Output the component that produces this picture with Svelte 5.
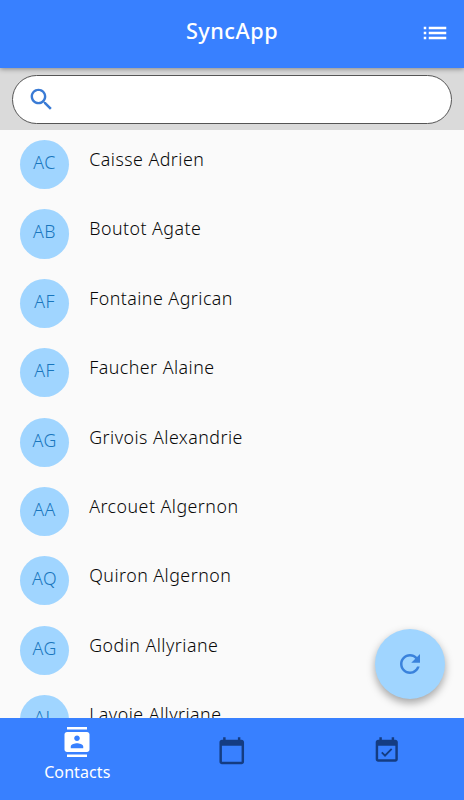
<script>
	const contacts = [
		{ name: 'Caisse Adrien', initials: 'AC' },
		{ name: 'Boutot Agate', initials: 'AB' },
		{ name: 'Fontaine Agrican', initials: 'AF' },
		{ name: 'Faucher Alaine', initials: 'AF' },
		{ name: 'Grivois Alexandrie', initials: 'AG' },
		{ name: 'Arcouet Algernon', initials: 'AA' },
		{ name: 'Quiron Algernon', initials: 'AQ' },
		{ name: 'Godin Allyriane', initials: 'AG' },
		{ name: 'Lavoie Allyriane', initials: 'AL' }
	];
</script>

<div class="app">
	<header>
		<h1>SyncApp</h1>
		<button class="menu" aria-label="Menu">
			<svg viewBox="0 0 24 24"><path d="M3 13h2v-2H3v2zm0 4h2v-2H3v2zm0-8h2V7H3v2zm4 4h14v-2H7v2zm0 4h14v-2H7v2zM7 7v2h14V7H7z" /></svg>
		</button>
	</header>

	<div class="search">
		<label class="field">
			<svg viewBox="0 0 24 24"><path d="M15.5 14h-.79l-.28-.27C15.41 12.59 16 11.11 16 9.5 16 5.91 13.09 3 9.5 3S3 5.91 3 9.5 5.91 16 9.5 16c1.61 0 3.09-.59 4.23-1.57l.27.28v.79l5 4.99L20.49 19l-4.99-5zm-6 0C7.01 14 5 11.99 5 9.5S7.01 5 9.5 5 14 7.01 14 9.5 11.99 14 9.5 14z" /></svg>
			<input type="text" aria-label="Search" />
		</label>
	</div>

	<main>
		<ul>
			{#each contacts as contact}
				<li>
					<span class="avatar">{contact.initials}</span>
					<span class="name">{contact.name}</span>
				</li>
			{/each}
		</ul>
	</main>

	<nav>
		<button class="tab active">
			<svg viewBox="0 0 24 24"><path d="M20 0H4v2h16V0zM4 24h16v-2H4v2zM20 4H4c-1.1 0-2 .9-2 2v12c0 1.1.9 2 2 2h16c1.1 0 2-.9 2-2V6c0-1.1-.9-2-2-2zm-8 2.75c1.24 0 2.25 1.01 2.25 2.25s-1.01 2.25-2.25 2.25S9.75 10.24 9.75 9 10.76 6.75 12 6.75zM17 17H7v-1.5c0-1.67 3.33-2.5 5-2.5s5 .83 5 2.5V17z" /></svg>
			<span>Contacts</span>
		</button>
		<button class="tab" aria-label="Calendar">
			<svg viewBox="0 0 24 24"><path d="M20 3h-1V1h-2v2H7V1H5v2H4c-1.1 0-2 .9-2 2v16c0 1.1.9 2 2 2h16c1.1 0 2-.9 2-2V5c0-1.1-.9-2-2-2zm0 18H4V8h16v13z" /></svg>
		</button>
		<button class="tab" aria-label="Events">
			<svg viewBox="0 0 24 24"><path d="M16.53 11.06L15.47 10l-4.88 4.88-2.12-2.12-1.06 1.06L10.59 17l5.94-5.94zM19 3h-1V1h-2v2H8V1H6v2H5c-1.11 0-1.99.9-1.99 2L3 19c0 1.1.89 2 2 2h14c1.1 0 2-.9 2-2V5c0-1.1-.9-2-2-2zm0 16H5V8h14v11z" /></svg>
		</button>
	</nav>

	<!-- floats over the list -->
	<button class="refresh" aria-label="Refresh">
		<svg viewBox="0 0 24 24"><path d="M17.65 6.35C16.2 4.9 14.21 4 12 4c-4.42 0-7.99 3.58-7.99 8s3.57 8 7.99 8c3.73 0 6.84-2.55 7.73-6h-2.08c-.82 2.33-3.04 4-5.65 4-3.31 0-6-2.69-6-6s2.69-6 6-6c1.66 0 3.14.69 4.22 1.78L13 11h7V4l-2.35 2.35z" /></svg>
	</button>
</div>

<style>
	:global(body) {
		margin: 0;
	}

	.app {
		position: relative;
		display: flex;
		flex-direction: column;
		height: 800px;
		overflow: hidden;
		background: #fafafa;
		font-family: 'Noto Sans', 'Open Sans', sans-serif;
	}

	button {
		padding: 0;
		border: 0;
		background: none;
		font: inherit;
		color: inherit;
	}

	svg {
		display: block;
		width: 30px;
		height: 30px;
		fill: currentColor;
	}

	header {
		position: relative;
		z-index: 1;
		display: grid;
		grid-template-columns: 1fr auto 1fr;
		flex: none;
		height: 68px;
		background: #3880ff;
		color: #fff;
		box-shadow: 0 1px 5px rgba(0, 0, 0, 0.4);
	}

	h1 {
		grid-column: 2;
		margin: 16px 0 0;
		font-size: 21.7px;
		font-weight: 550;
		line-height: 30px;
		letter-spacing: 0.5px;
	}

	.menu {
		justify-self: end;
		align-self: start;
		margin: 18px 14px 0 0;
	}

	.search {
		flex: none;
		box-sizing: border-box;
		height: 62px;
		padding: 7px 12px 0;
		background: #dadada;
	}

	.field {
		display: flex;
		align-items: center;
		box-sizing: border-box;
		height: 49px;
		padding: 0 14px;
		border: 1px solid #555;
		border-radius: 25px;
		background: #fff;
		color: #3a7bd5;
	}

	.field svg {
		width: 29px;
		height: 29px;
	}

	input {
		flex: 1;
		border: 0;
		outline: 0;
		background: none;
	}

	main {
		flex: 1;
		min-height: 0;
		overflow: hidden;
	}

	ul {
		margin: 0;
		padding: 10px 20px 0;
		list-style: none;
	}

	li {
		display: flex;
		height: 69.375px;
	}

	.avatar {
		width: 49.2px;
		height: 49.2px;
		border-radius: 50%;
		background: #a0d5ff;
		color: #1976bd;
		font-size: 17.8px;
		font-weight: 350;
		line-height: 45px;
		letter-spacing: 0.5px;
		text-align: center;
	}

	.name {
		margin-left: 20px;
		color: #080808;
		font-size: 17.8px;
		font-weight: 350;
		line-height: 39.6px;
		letter-spacing: 0.48px;
		white-space: nowrap;
	}

	nav {
		display: grid;
		grid-template-columns: repeat(3, 1fr);
		flex: none;
		height: 82px;
		background: #3880ff;
		color: #143c82;
	}

	.tab {
		display: flex;
		flex-direction: column;
		align-items: center;
		padding-top: 18px;
	}

	.tab svg {
		width: 29.5px;
		height: 29.5px;
	}

	.active {
		padding-top: 9px;
		color: #fff;
	}

	.active svg {
		width: 30px;
		height: 30px;
	}

	.active span {
		margin-top: 4px;
		font-size: 16px;
		line-height: 22px;
		letter-spacing: 0.1px;
	}

	.refresh {
		position: absolute;
		right: 19px;
		bottom: 101px;
		display: flex;
		align-items: center;
		justify-content: center;
		width: 70px;
		height: 70px;
		border-radius: 50%;
		background: #a0d5ff;
		color: #3a82dc;
		box-shadow: 0 4px 8px rgba(0, 0, 0, 0.35);
	}
</style>
